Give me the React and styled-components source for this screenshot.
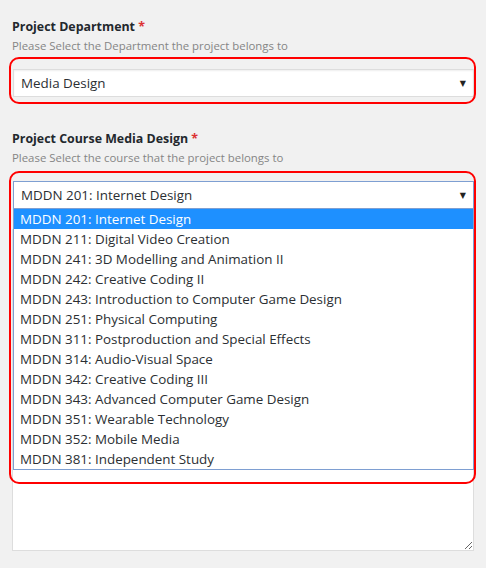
import React from "react";
import styled, { createGlobalStyle } from "styled-components";

const courses = [
   "MDDN 201: Internet Design",
   "MDDN 211: Digital Video Creation",
   "MDDN 241: 3D Modelling and Animation II",
   "MDDN 242: Creative Coding II",
   "MDDN 243: Introduction to Computer Game Design",
   "MDDN 251: Physical Computing",
   "MDDN 311: Postproduction and Special Effects",
   "MDDN 314: Audio-Visual Space",
   "MDDN 342: Creative Coding III",
   "MDDN 343: Advanced Computer Game Design",
   "MDDN 351: Wearable Technology",
   "MDDN 352: Mobile Media",
   "MDDN 381: Independent Study",
];

const GlobalStyle = createGlobalStyle`
   html, body {
      margin: 0;
      padding: 0;
      background: #f1f1f1;
   }
   body {
      font-family: "Open Sans", "Noto Sans", sans-serif;
      color: #32373c;
   }
`;

export default function App() {
   return (
      <>
         <GlobalStyle />
         <Page>
            <Field>
               <Label>
                  Project Department <Req>*</Req>
               </Label>
               <Hint>Please Select the Department the project belongs to</Hint>
               <SelectWrap>
                  <Select>
                     <span>Media Design</span>
                     <Arrow>▼</Arrow>
                  </Select>
                  <Ring $top={-12} $height={47} />
               </SelectWrap>
            </Field>

            <Field $gap={32}>
               <Label>
                  Project Course Media Design <Req>*</Req>
               </Label>
               <Hint>Please Select the course that the project belongs to</Hint>
               <SelectWrap>
                  <Select $focused>
                     <span>MDDN 201: Internet Design</span>
                     <Arrow>▼</Arrow>
                  </Select>
                  <Dropdown>
                     {courses.map((c, i) => (
                        <Option key={c} $active={i === 0}>
                           {c}
                        </Option>
                     ))}
                  </Dropdown>
                  <Ring $top={-10} $height={313} />
               </SelectWrap>
               <TextArea />
            </Field>
         </Page>
      </>
   );
}

const Page = styled.div`
   padding: 17px 12px 0;
`;

const Field = styled.div`
   margin-top: ${(p) => p.$gap || 0}px;
`;

const Label = styled.div`
   font-size: 12.4px;
   font-weight: 700;
   line-height: 20px;
   color: #23282d;
`;

const Req = styled.span`
   color: #dc3232;
`;

const Hint = styled.div`
   font-size: 11.4px;
   line-height: 18px;
   color: #858585;
`;

const SelectWrap = styled.div`
   position: relative;
   margin-top: 14px;
   margin-left: 1px;
`;

const Select = styled.div`
   box-sizing: border-box;
   height: 28px;
   display: flex;
   align-items: center;
   justify-content: space-between;
   padding: 0 7px 0 7px;
   background: #fff;
   border: 1px solid ${(p) => (p.$focused ? "#7e9fd2" : "#ddd")};
   box-shadow: ${(p) => (p.$focused ? "none" : "inset 0 1px 2px rgba(0,0,0,0.07)")};
   font-size: 13.4px;
   color: #2b2f33;
`;

const Arrow = styled.span`
   font-size: 8px;
   color: #222;
   font-family: "DejaVu Sans", sans-serif;
`;

const Dropdown = styled.div`
   position: absolute;
   top: 100%;
   left: 0;
   right: 0;
   z-index: 2;
   background: #fff;
   border: 1px solid #7e9fd2;
   border-top: none;
`;

const Option = styled.div`
   height: 20px;
   line-height: 21px;
   padding-left: 6px;
   font-size: 13.4px;
   white-space: nowrap;
   background: ${(p) => (p.$active ? "#1e90ff" : "#fff")};
   color: ${(p) => (p.$active ? "#fff" : "#2b2f33")};
`;

const Ring = styled.div`
   position: absolute;
   z-index: 3;
   top: ${(p) => p.$top}px;
   height: ${(p) => p.$height}px;
   left: -4px;
   right: -2px;
   box-sizing: border-box;
   border: 2px solid #ff0000;
   border-radius: 10px;
   pointer-events: none;
`;

const TextArea = styled.textarea`
   display: block;
   box-sizing: border-box;
   width: 100%;
   height: 322px;
   margin-top: 20px;
   border: 1px solid #ddd;
   background: #fff;
   resize: vertical;
   outline: none;
`;
